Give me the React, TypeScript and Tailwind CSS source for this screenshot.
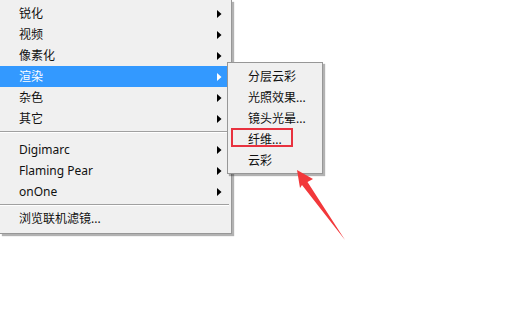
import React from "react";

const font = "font-['Noto_Sans','Noto_Sans_CJK_SC',sans-serif]";

function Arrow({ white }: { white?: boolean }) {
  return (
    <svg width="5" height="8" viewBox="0 0 5 8" className="shrink-0">
      <polygon points="0,0 4.5,4 0,8" fill={white ? "#ffffff" : "#000000"} />
    </svg>
  );
}

function Item({ label, sub, active }: { label: string; sub?: boolean; active?: boolean }) {
  return (
    <div
      className={`h-[21px] flex items-center pl-[19px] pr-[5px] mr-[4px] text-[12px] leading-none ${
        active ? "bg-[#3399ff] text-white" : "text-[#111]"
      }`}
    >
      <span className="flex-1 whitespace-nowrap">{label}</span>
      {sub && <Arrow white={active} />}
    </div>
  );
}

export default function App() {
  return (
    <div className={`relative w-[506px] h-[315px] bg-white overflow-hidden ${font}`}>
      <div className="absolute left-0 top-0 w-[232px] h-[234px] bg-[#f0f0f0] border-r border-b border-[#979797] shadow-[2px_2px_1px_rgba(0,0,0,0.3)] pt-[3px]">
        <Item label="锐化" sub />
        <Item label="视频" sub />
        <Item label="像素化" sub />
        <Item label="渲染" sub active />
        <Item label="杂色" sub />
        <Item label="其它" sub />
        <div className="h-[10px] pt-[2px]">
          <div className="h-px bg-[#a0a0a0] mr-[2px]" />
          <div className="h-px bg-white mr-[2px]" />
        </div>
        <Item label="Digimarc" sub />
        <Item label="Flaming Pear" sub />
        <Item label="onOne" sub />
        <div className="h-[6px] pt-[2px]">
          <div className="h-px bg-[#a0a0a0] mr-[2px]" />
          <div className="h-px bg-white mr-[2px]" />
        </div>
        <Item label="浏览联机滤镜..." />
      </div>

      <div className="absolute left-[227px] top-[62px] w-[96px] h-[112px] bg-[#f0f0f0] border border-[#979797] shadow-[2px_2px_1px_rgba(0,0,0,0.3)] pt-[3px]">
        {["分层云彩", "光照效果...", "镜头光晕...", "纤维...", "云彩"].map((t) => (
          <div key={t} className="h-[21px] flex items-center pl-[20px] text-[12px] leading-none text-[#111] whitespace-nowrap">
            {t}
          </div>
        ))}
        <div className="absolute left-[3px] top-[65px] w-[62px] h-[19px] border-2 border-[#e8323f]" />
      </div>

      <svg className="absolute left-0 top-0" width="506" height="315" viewBox="0 0 506 315">
        <polygon
          points="297,170 313,179 307.5,182 345,240 302,185 300,188"
          fill="#f2383b"
        />
      </svg>
    </div>
  );
}
